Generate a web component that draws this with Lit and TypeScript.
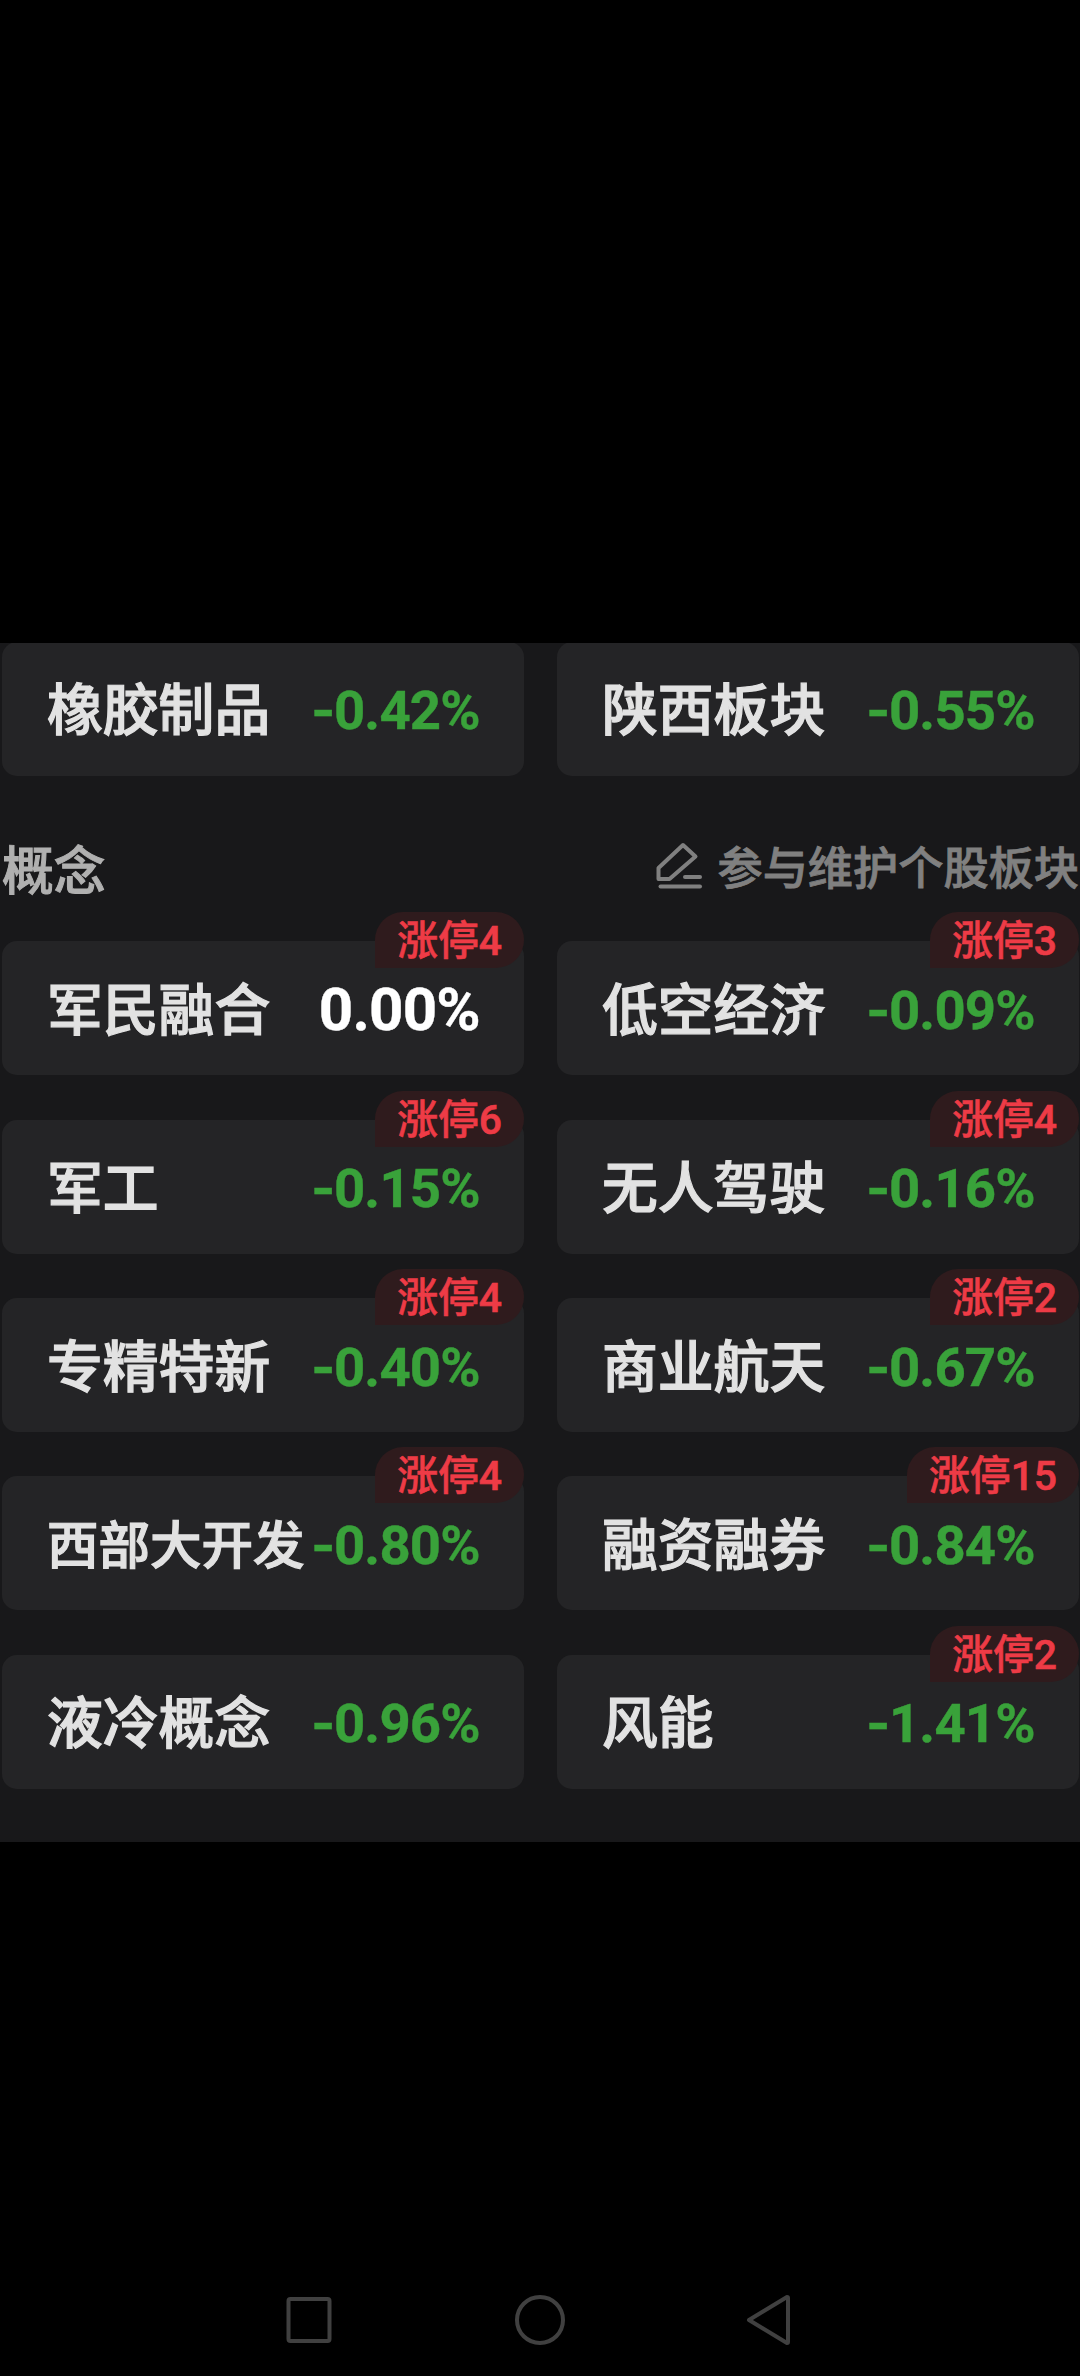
import { LitElement, html, css, svg } from "lit";
import { customElement, property } from "lit/decorators.js";

interface Sector {
  name: string;
  change: string;
  limitUp?: number;
}

const TOP: Sector[] = [
  { name: "橡胶制品", change: "-0.42%" },
  { name: "陕西板块", change: "-0.55%" },
];

const CONCEPTS: Sector[] = [
  { name: "军民融合", change: "0.00%", limitUp: 4 },
  { name: "低空经济", change: "-0.09%", limitUp: 3 },
  { name: "军工", change: "-0.15%", limitUp: 6 },
  { name: "无人驾驶", change: "-0.16%", limitUp: 4 },
  { name: "专精特新", change: "-0.40%", limitUp: 4 },
  { name: "商业航天", change: "-0.67%", limitUp: 2 },
  { name: "西部大开发", change: "-0.80%", limitUp: 4 },
  { name: "融资融券", change: "-0.84%", limitUp: 15 },
  { name: "液冷概念", change: "-0.96%" },
  { name: "风能", change: "-1.41%", limitUp: 2 },
];

@customElement("sector-card")
export class SectorCard extends LitElement {
  @property({ attribute: false }) sector!: Sector;

  static styles = css`
    :host { display: block; }
    .card {
      position: relative;
      box-sizing: border-box;
      height: 134px;
      padding: 0 44px 0 45px;
      border-radius: 15px;
      background: #242426;
      display: flex;
      align-items: center;
      justify-content: space-between;
      white-space: nowrap;
    }
    .name {
      font: 500 55.8px/80px "Noto Sans CJK SC", sans-serif;
      -webkit-text-stroke: 1.2px #e2e2e2;
      padding-bottom: 5px;
      color: #e2e2e2;
    }
    .name.long { font-size: 51.5px; padding-bottom: 2px; }
    .change {
      font: 700 54.5px/64px Roboto, sans-serif;
      letter-spacing: -0.8px;
      margin-right: 0.2px;
      padding-top: 3px;
      -webkit-text-stroke: 0.4px currentColor;
      color: #39a23a;
    }
    .sign {
      font: 700 52px/1 Inter, sans-serif;
      letter-spacing: -1.5px;
    }
    .change.flat {
      font-size: 60px;
      letter-spacing: -0.8px;
      padding-top: 4px;
      color: #fff;
    }
    .badge {
      position: absolute;
      right: 0;
      top: -29px;
      box-sizing: border-box;
      height: 56px;
      padding: 1px 22px 0 22px;
      border-radius: 28px 28px 28px 0;
      background: #2f1b1d;
      color: #ee3b46;
      font: 500 40.8px/56px Roboto, "Noto Sans CJK SC", sans-serif;
      -webkit-text-stroke: 0.6px currentColor;
    }
  `;

  render() {
    const { name, change, limitUp } = this.sector;
    const down = change.startsWith("-");
    return html`
      <div class="card">
        <span class="name ${name.length > 4 ? "long" : ""}">${name}</span>
        <span class="change ${down ? "" : "flat"}">${down
          ? html`<span class="sign">-</span>${change.slice(1)}`
          : change}</span>
        ${limitUp ? html`<span class="badge">涨停${limitUp}</span>` : null}
      </div>
    `;
  }
}

const editIcon = svg`
  <path d="M27 3 L39.5 14.5 L13.5 37 H2.5 V26 Z" />
  <path d="M29 35 H44" />
  <path d="M4.5 44.5 H44" />
`;

@customElement("app-root")
export class AppRoot extends LitElement {
  static styles = css`
    :host {
      display: flex;
      flex-direction: column;
      height: 2376px;
      box-sizing: border-box;
      padding-top: 643px;
      background: #000;
      overflow: hidden;
    }
    .panel {
      box-sizing: border-box;
      flex: none;
      height: 1199px;
      padding: 0 1px 0 2px;
      background: #18181a;
      overflow: hidden;
    }
    .grid {
      display: grid;
      grid-template-columns: 522px 522px;
      column-gap: 33px;
      row-gap: 44.4px;
    }
    .first { margin-top: -1.5px; }
    .heading {
      display: flex;
      justify-content: space-between;
      align-items: center;
      height: 165.8px;
      box-sizing: border-box;
      padding-top: 20px;
      white-space: nowrap;
    }
    .title {
      font: 500 51.8px/76px "Noto Sans CJK SC", sans-serif;
      -webkit-text-stroke: 1px currentColor;
      color: #b0b0b0;
    }
    .edit {
      display: flex;
      align-items: center;
      gap: 14px;
      font: 500 45.2px/66px "Noto Sans CJK SC", sans-serif;
      -webkit-text-stroke: 0.8px currentColor;
      color: #808080;
      padding-bottom: 5px;
    }
    .pen {
      width: 48px;
      height: 48px;
      fill: none;
      stroke: currentColor;
      stroke-width: 4;
      stroke-linecap: round;
      stroke-linejoin: round;
    }
    .nav {
      margin-top: auto;
      height: 112px;
      display: flex;
      justify-content: center;
      align-items: center;
    }
    .keys {
      width: 510px;
      height: 56px;
      fill: none;
      stroke: #404040;
      stroke-width: 4;
      stroke-linejoin: round;
    }
  `;

  private cards(list: Sector[]) {
    return list.map((s) => html`<sector-card .sector=${s}></sector-card>`);
  }

  render() {
    return html`
      <main class="panel">
        <section class="grid first">${this.cards(TOP)}</section>
        <header class="heading">
          <span class="title">概念</span>
          <span class="edit">
            <svg class="pen" viewBox="0 0 48 48">${editIcon}</svg>
            <span>参与维护个股板块</span>
          </span>
        </header>
        <section class="grid">${this.cards(CONCEPTS)}</section>
      </main>
      <nav class="nav">
        <svg class="keys" viewBox="0 0 510 56">
          <rect x="3.5" y="7" width="41" height="42" rx="2" />
          <circle cx="255" cy="28" r="23" />
          <path d="M464 28 L502 5 Q503 5 503 6 V50 Q503 51 502 51 Z" />
        </svg>
      </nav>
    `;
  }
}
